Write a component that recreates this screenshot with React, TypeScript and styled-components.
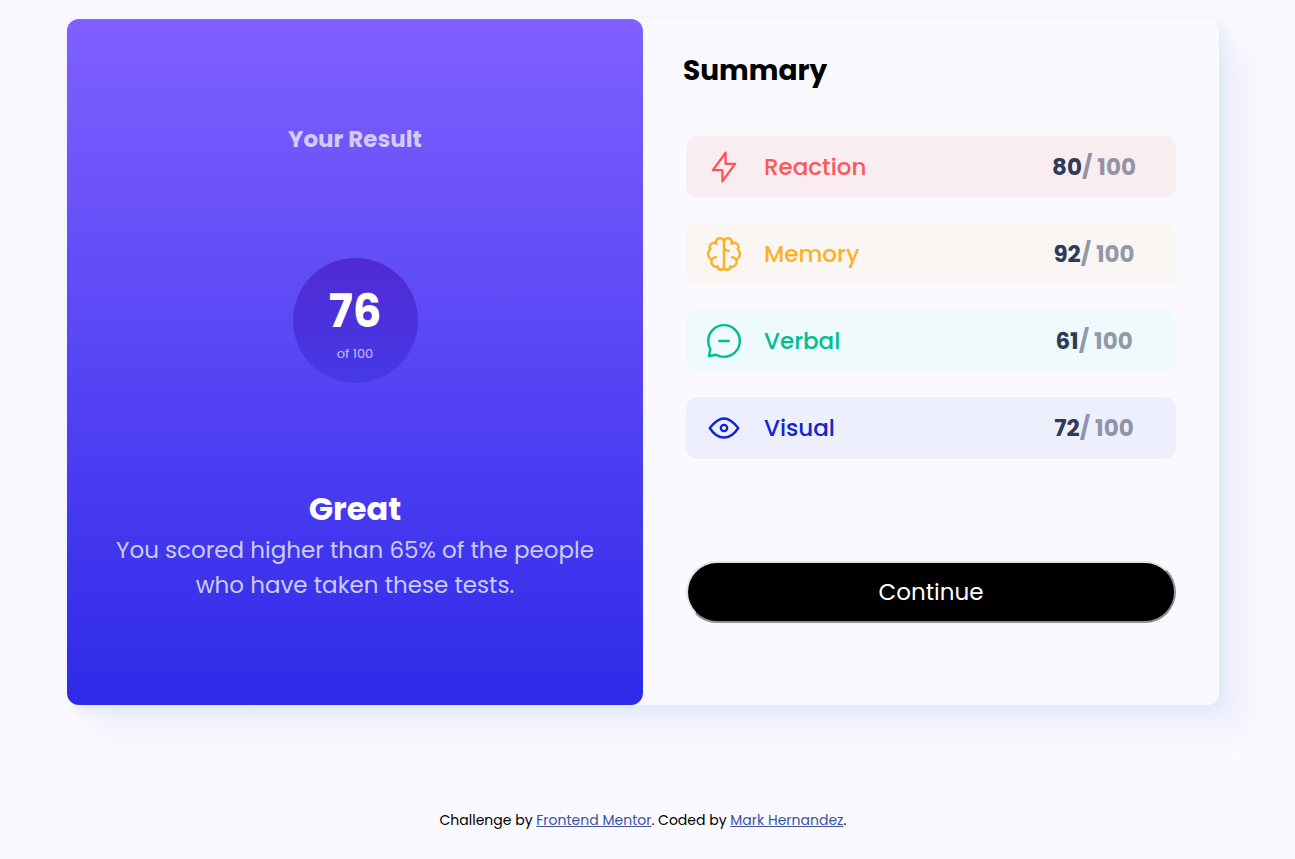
import React from "react";
import styled, { createGlobalStyle } from "styled-components";

const GlobalStyle = createGlobalStyle`
  *, *::before, *::after { box-sizing: border-box; }
  body {
    margin: 0;
    background: #faf9ff;
    color: #000;
    font-family: Poppins, Inter, "Open Sans", sans-serif;
  }
  h1, h2, h3, p, ul { margin: 0; padding: 0; }
`;

const Page = styled.div`
  display: flex;
  flex-direction: column;
  gap: 103px;
  padding: 19px 76px 27px 67px;
`;

const Card = styled.main`
  display: grid;
  grid-template-columns: 1fr 1fr;
  min-height: 686px;
  border-radius: 12px;
  background: #faf9ff;
  box-shadow:
    5px 5px 14px #deeaf5,
    28px 28px 28px #efefff,
    36px 36px 32px #f8fbff;
`;

const Result = styled.section`
  display: flex;
  flex-direction: column;
  align-items: center;
  padding: 102px 48px 40px;
  border-radius: 12px;
  background: linear-gradient(#8060ff, #2e2ae9);
  text-align: center;
`;

const ResultTitle = styled.h2`
  color: #d4cbf2;
  font-size: 23px;
  line-height: 36px;
  font-weight: 700;
`;

const ScoreCircle = styled.div`
  display: flex;
  flex-direction: column;
  align-items: center;
  width: 125px;
  height: 125px;
  margin: 101px 0 102px;
  padding-top: 21px;
  border-radius: 50%;
  background: linear-gradient(#512ad3, #4639e6);
`;

const ScoreValue = styled.strong`
  color: #fff;
  font-size: 45px;
  line-height: 66px;
  font-weight: 700;
`;

const ScoreTotal = styled.span`
  color: #c8c1ef;
  font-size: 13px;
  line-height: 18px;
`;

const Verdict = styled.h1`
  color: #fff;
  font-size: 32px;
  line-height: 48px;
  font-weight: 700;
`;

const Detail = styled.p`
  color: #cdcbf5;
  font-size: 23px;
  line-height: 35px;
`;

const Summary = styled.section`
  display: flex;
  flex-direction: column;
  padding: 30px 43px 40px;
`;

const SummaryTitle = styled.h2`
  margin-left: -3px;
  font-size: 28px;
  line-height: 44px;
  font-weight: 700;
`;

const ScoreList = styled.ul`
  display: flex;
  flex-direction: column;
  gap: 25px;
  margin: 43px 0 102px;
  list-style: none;
`;

const ScoreRow = styled.li<{ $color: string; $background: string }>`
  display: grid;
  grid-template-columns: 38px 1fr 164px;
  align-items: center;
  column-gap: 21px;
  height: 62px;
  padding-left: 19px;
  border-radius: 12px;
  background: ${(p) => p.$background};
  color: ${(p) => p.$color};
  font-size: 23px;
  line-height: 36px;
  font-weight: 500;
`;

const Icon = styled.svg`
  width: 38px;
  height: 38px;
  fill: none;
  stroke: currentColor;
  stroke-width: 1.25;
  stroke-linecap: round;
  stroke-linejoin: round;
`;

const Points = styled.span`
  color: #303b5a;
  font-weight: 700;
  text-align: center;
`;

const OutOf = styled.span`
  opacity: 0.5;
`;

const ContinueButton = styled.button`
  height: 62px;
  border: 2px solid;
  border-color: #e3e3e3 #8f8f8f #8f8f8f #e3e3e3;
  border-radius: 31px;
  background: #000;
  color: #fff;
  font: inherit;
  font-size: 23px;
  line-height: 36px;
  cursor: pointer;
`;

const Footer = styled.footer`
  font-size: 14px;
  line-height: 24px;
  text-align: center;
`;

const FooterLink = styled.a`
  color: #3e52a3;
`;

const scores = [
  {
    label: "Reaction",
    value: 80,
    color: "#ff5757",
    background: "#faedf2",
    paths: ["M10.833 8.333V2.5l-6.666 9.167h5V17.5l6.666-9.167h-5Z"],
  },
  {
    label: "Memory",
    value: 92,
    color: "#ffb01f",
    background: "#faf6f4",
    paths: [
      "M5.833 11.667a2.5 2.5 0 1 0 .834 4.858",
      "M3.553 13.004a3.333 3.333 0 0 1-.728-5.53m.025-.067a2.083 2.083 0 0 1 2.983-2.824m.199.054A2.083 2.083 0 1 1 10 3.75v12.917a1.667 1.667 0 0 1-3.333 0M10 5.833a2.5 2.5 0 0 0 2.5 2.5m1.667 3.334a2.5 2.5 0 1 1-.834 4.858",
      "M16.447 13.004a3.334 3.334 0 0 0 .728-5.53m-.025-.067a2.083 2.083 0 0 0-2.983-2.824M10 3.75a2.085 2.085 0 0 1 2.538-2.033 2.084 2.084 0 0 1 1.43 2.92m-.635 12.03a1.667 1.667 0 0 1-3.333 0",
    ],
  },
  {
    label: "Verbal",
    value: 61,
    color: "#00bd91",
    background: "#effafd",
    paths: [
      "M7.5 10h5M10 18.333A8.333 8.333 0 1 0 1.667 10c0 1.518.406 2.942 1.115 4.167l-.699 3.75 3.75-.699A8.295 8.295 0 0 0 10 18.333Z",
    ],
  },
  {
    label: "Visual",
    value: 72,
    color: "#1125d4",
    background: "#eeeffd",
    paths: [
      "M10 11.667a1.667 1.667 0 1 0 0-3.334 1.667 1.667 0 0 0 0 3.334Z",
      "M17.5 10c-1.574 2.492-4.402 5-7.5 5s-5.926-2.508-7.5-5C4.416 7.632 6.66 5 10 5s5.584 2.632 7.5 5Z",
    ],
  },
];

export default function App() {
  return (
    <>
      <GlobalStyle />
      <Page>
        <Card>
          <Result>
            <ResultTitle>Your Result</ResultTitle>
            <ScoreCircle>
              <ScoreValue>76</ScoreValue>
              <ScoreTotal>of 100</ScoreTotal>
            </ScoreCircle>
            <Verdict>Great</Verdict>
            <Detail>You scored higher than 65% of the people who have taken these tests.</Detail>
          </Result>
          <Summary>
            <SummaryTitle>Summary</SummaryTitle>
            <ScoreList>
              {scores.map((s) => (
                <ScoreRow key={s.label} $color={s.color} $background={s.background}>
                  <Icon viewBox="0 0 20 20" aria-hidden="true">
                    {s.paths.map((d) => (
                      <path key={d} d={d} />
                    ))}
                  </Icon>
                  <span>{s.label}</span>
                  <Points>
                    {s.value}
                    <OutOf>/ 100</OutOf>
                  </Points>
                </ScoreRow>
              ))}
            </ScoreList>
            <ContinueButton type="button">Continue</ContinueButton>
          </Summary>
        </Card>
        <Footer>
          Challenge by <FooterLink href="#frontend-mentor">Frontend Mentor</FooterLink>. Coded by{" "}
          <FooterLink href="#mark-hernandez">Mark Hernandez</FooterLink>.
        </Footer>
      </Page>
    </>
  );
}
